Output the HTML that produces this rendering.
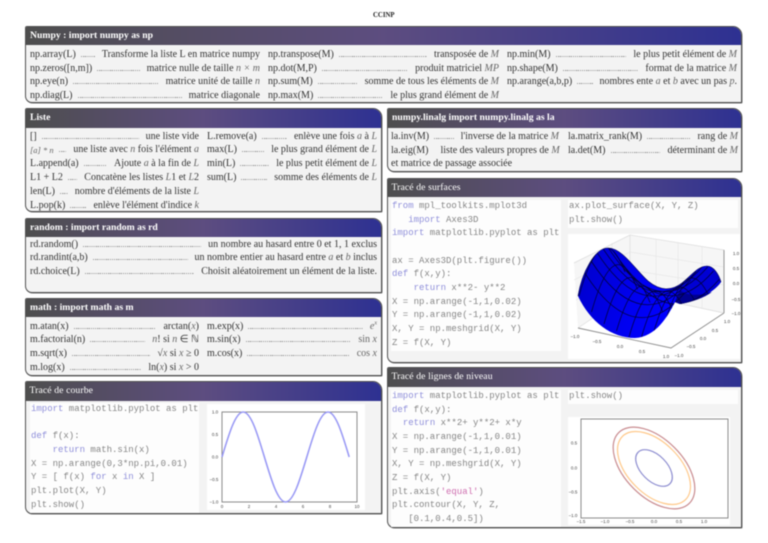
<!DOCTYPE html>
<html lang="fr"><head><meta charset="utf-8"><title>CCINP</title>
<style>
html,body{margin:0;padding:0;background:#fff}
#w{position:relative;width:768px;height:543px;overflow:hidden;filter:blur(.5px);font-family:"Liberation Serif",serif;color:#333}
.t{position:absolute;left:373px;top:11px;font-size:6.8px;font-weight:bold;color:#222;line-height:10px}
.b{position:absolute;box-sizing:border-box;border:1px solid #505050;border-radius:2px 9px 1px 7px;background:#f3f3f3;overflow:hidden;box-shadow:.5px .5px 0 #777}
.h{position:absolute;left:0;right:0;top:0;background:linear-gradient(90deg,#4e4e4e 0,#5d4d80 50%,#2e3192 100%);color:#fff;box-sizing:border-box;padding-left:4px;font-weight:bold;font-size:9.7px}
.h.n{font-weight:normal;font-size:9.7px;letter-spacing:.1px;padding-left:3.5px}
.r{position:absolute;display:flex;height:12px;line-height:12px;font-size:10px;white-space:nowrap}
.r i.l{flex:1;min-width:0;height:1px;margin:6.5px 7px 0 5px;background:repeating-linear-gradient(90deg,#999 0 1.2px,transparent 1.2px 2.1px)}
.r em{color:#666}
pre{position:absolute;margin:0;box-sizing:border-box;background:#fdfdfd;font-family:"Liberation Mono",monospace;font-size:9px;line-height:13.65px;color:#858585;padding-left:1px}
pre b{font-weight:normal;color:#8f8fda}
pre u{text-decoration:none;color:#cf6fb0}
svg{position:absolute;left:0;top:0}
svg text{font-family:"Liberation Sans",sans-serif;font-size:4.5px;fill:#444;text-anchor:middle}
</style></head><body><div id="w">
<div class="t">CCINP</div>

<div class="b" style="left:25px;top:26px;width:717px;height:77px"><div class="h" style="height:18px;line-height:18px">Numpy : import numpy as np</div></div>
<div class="r" style="left:30px;top:49px;width:230px"><span>np.array(L)</span><i class="l"></i><span>Transforme la liste L en matrice numpy</span></div>
<div class="r" style="left:30px;top:63px;width:230px"><span>np.zeros([n,m])</span><i class="l"></i><span>matrice nulle de taille <em>n × m</em></span></div>
<div class="r" style="left:30px;top:76px;width:230px"><span>np.eye(n)</span><i class="l"></i><span>matrice unité de taille <em>n</em></span></div>
<div class="r" style="left:30px;top:90px;width:230px"><span>np.diag(L)</span><i class="l"></i><span>matrice diagonale</span></div>
<div class="r" style="left:268px;top:49px;width:231px"><span>np.transpose(M)</span><i class="l"></i><span>transposée de <em>M</em></span></div>
<div class="r" style="left:268px;top:63px;width:231px"><span>np.dot(M,P)</span><i class="l"></i><span>produit matriciel <em>MP</em></span></div>
<div class="r" style="left:268px;top:76px;width:231px"><span>np.sum(M)</span><i class="l"></i><span>somme de tous les éléments de <em>M</em></span></div>
<div class="r" style="left:268px;top:90px;width:231px"><span>np.max(M)</span><i class="l"></i><span>le plus grand élément de <em>M</em></span></div>
<div class="r" style="left:507px;top:49px;width:230px"><span>np.min(M)</span><i class="l"></i><span>le plus petit élément de <em>M</em></span></div>
<div class="r" style="left:507px;top:63px;width:230px"><span>np.shape(M)</span><i class="l"></i><span>format de la matrice <em>M</em></span></div>
<div class="r" style="left:507px;top:76px;width:230px"><span>np.arange(a,b,p)</span><i class="l"></i><span>nombres ente <em>a</em> et <em>b</em> avec un pas <em>p</em>.</span></div>

<div class="b" style="left:25px;top:108px;width:357px;height:104px"><div class="h" style="height:19px;line-height:18px">Liste</div></div>
<div class="r" style="left:30px;top:131px;width:169px"><span>[]</span><i class="l"></i><span>une liste vide</span></div>
<div class="r" style="left:30px;top:144px;width:169px"><span><em style="font-size:8.5px">[a] * n</em></span><i class="l"></i><span>une liste avec <em>n</em> fois l'élément <em>a</em></span></div>
<div class="r" style="left:30px;top:158px;width:169px"><span>L.append(a)</span><i class="l"></i><span>Ajoute <em>a</em> à la fin de <em>L</em></span></div>
<div class="r" style="left:30px;top:172px;width:169px"><span>L1 + L2</span><i class="l"></i><span>Concatène les listes <em>L</em>1 et <em>L</em>2</span></div>
<div class="r" style="left:30px;top:186px;width:169px"><span>len(L)</span><i class="l"></i><span>nombre d'éléments de la liste <em>L</em></span></div>
<div class="r" style="left:30px;top:200px;width:169px"><span>L.pop(k)</span><i class="l"></i><span>enlève l'élément d'indice <em>k</em></span></div>
<div class="r" style="left:207px;top:131px;width:170px"><span>L.remove(a)</span><i class="l"></i><span>enlève une fois <em>a</em> à <em>L</em></span></div>
<div class="r" style="left:207px;top:144px;width:170px"><span>max(L)</span><i class="l"></i><span>le plus grand élément de <em>L</em></span></div>
<div class="r" style="left:207px;top:158px;width:170px"><span>min(L)</span><i class="l"></i><span>le plus petit élément de <em>L</em></span></div>
<div class="r" style="left:207px;top:172px;width:170px"><span>sum(L)</span><i class="l"></i><span>somme des éléments de <em>L</em></span></div>

<div class="b" style="left:25px;top:218px;width:357px;height:75px"><div class="h" style="height:18px;line-height:18px">random : import random as rd</div></div>
<div class="r" style="left:30px;top:239px;width:347px"><span>rd.random()</span><i class="l"></i><span>un nombre au hasard entre 0 et 1, 1 exclus</span></div>
<div class="r" style="left:30px;top:252px;width:347px"><span>rd.randint(a,b)</span><i class="l"></i><span>un nombre entier au hasard entre <em>a</em> et <em>b</em> inclus</span></div>
<div class="r" style="left:30px;top:266px;width:347px"><span>rd.choice(L)</span><i class="l"></i><span>Choisit aléatoirement un élément de la liste.</span></div>

<div class="b" style="left:25px;top:298px;width:357px;height:78px"><div class="h" style="height:18px;line-height:18px">math : import math as m</div></div>
<div class="r" style="left:30px;top:321px;width:169px"><span>m.atan(x)</span><i class="l"></i><span>arctan(<em>x</em>)</span></div>
<div class="r" style="left:30px;top:334px;width:169px"><span>m.factorial(n)</span><i class="l"></i><span><em>n</em>! si <em>n</em> ∈ ℕ</span></div>
<div class="r" style="left:30px;top:348px;width:169px"><span>m.sqrt(x)</span><i class="l"></i><span>√<em>x</em> si <em>x</em> ≥ 0</span></div>
<div class="r" style="left:30px;top:362px;width:169px"><span>m.log(x)</span><i class="l"></i><span>ln(<em>x</em>) si <em>x</em> &gt; 0</span></div>
<div class="r" style="left:207px;top:321px;width:170px"><span>m.exp(x)</span><i class="l"></i><span><em>e<sup style="font-size:6px;line-height:0">x</sup></em></span></div>
<div class="r" style="left:207px;top:334px;width:170px"><span>m.sin(x)</span><i class="l"></i><span style="color:#666">sin <em>x</em></span></div>
<div class="r" style="left:207px;top:348px;width:170px"><span>m.cos(x)</span><i class="l"></i><span style="color:#666">cos <em>x</em></span></div>

<div class="b" style="left:25px;top:381px;width:357px;height:133px"><div class="h n" style="height:19px;line-height:18px">Tracé de courbe</div></div>
<pre style="left:30px;top:403px;width:169px;height:110px"><b>import</b> matplotlib.pyplot as plt

<b>def</b> f(x):
    <b>return</b> math.sin(x)
X = np.arange(0,3*np.pi,0.01)
Y = [ f(x) <b>for</b> x <b>in</b> X ]
plt.plot(X, Y)
plt.show()</pre>

<div class="b" style="left:387px;top:108px;width:355px;height:64px"><div class="h" style="height:19px;line-height:18px">numpy.linalg import numpy.linalg as la</div></div>
<div class="r" style="left:391px;top:131px;width:168px"><span>la.inv(M)</span><i class="l"></i><span>l'inverse de la matrice <em>M</em></span></div>
<div class="r" style="left:391px;top:145px;width:168px"><span>la.eig(M)</span><i class="l" style="background:none"></i><span>liste des valeurs propres de <em>M</em></span></div>
<div class="r" style="left:391px;top:158px;width:168px"><span>et matrice de passage associée</span></div>
<div class="r" style="left:568px;top:131px;width:170px"><span>la.matrix_rank(M)</span><i class="l"></i><span>rang de <em>M</em></span></div>
<div class="r" style="left:568px;top:145px;width:170px"><span>la.det(M)</span><i class="l"></i><span>déterminant de <em>M</em></span></div>

<div class="b" style="left:387px;top:178px;width:355px;height:185px"><div class="h n" style="height:18px;line-height:17px">Tracé de surfaces</div></div>
<pre style="left:391px;top:200px;width:170px;height:151px"><b>from</b> mpl_toolkits.mplot3d
   <b>import</b> Axes3D
<b>import</b> matplotlib.pyplot as plt

ax = Axes3D(plt.figure())
<b>def</b> f(x,y):
    <b>return</b> x**2- y**2
X = np.arange(-1,1,0.02)
Y = np.arange(-1,1,0.02)
X, Y = np.meshgrid(X, Y)
Z = f(X, Y)</pre>
<pre style="left:568px;top:200px;width:170px;height:28px">ax.plot_surface(X, Y, Z)
plt.show()</pre>

<div class="b" style="left:387px;top:367px;width:355px;height:161px"><div class="h n" style="height:19px;line-height:18px">Tracé de lignes de niveau</div></div>
<pre style="left:391px;top:390px;width:170px;height:137px"><b>import</b> matplotlib.pyplot as plt
<b>def</b> f(x,y):
  <b>return</b> x**2+ y**2+ x*y
X = np.arange(-1,1,0.01)
Y = np.arange(-1,1,0.01)
X, Y = np.meshgrid(X, Y)
Z = f(X, Y)
plt.axis(<u>'equal'</u>)
plt.contour(X, Y, Z,
   [0.1,0.4,0.5])</pre>
<pre style="left:568px;top:390px;width:170px;height:14px">plt.show()</pre>

<svg width="768" height="543" viewBox="0 0 768 543" fill="none">
<defs>
<linearGradient id="g" x1="0" y1="0" x2="1" y2=".25"><stop offset="0" stop-color="#0000c8"/><stop offset=".5" stop-color="#0000f0"/><stop offset=".75" stop-color="#0000ff"/><stop offset="1" stop-color="#0000c8"/></linearGradient>
<clipPath id="c"><path d="M578 296C582 272 595 248 608 248C622 248 634 268 648 281C660 291 672 291 682 283C692 275 698 266 707 266C714 266 719 275 721 282C714 292 698 301 680 304L675 302C668 316 656 337 635 338C612 338 590 322 578 296Z"/></clipPath>
</defs>

<!-- sine -->
<rect x="207" y="404" width="158" height="106" fill="#fff"/>
<rect x="222" y="412" width="135" height="90" stroke="#8a8a8a" stroke-width="1"/>
<path d="M222 457C228.9 434 235.5 412 243.2 412C250.9 412 257.5 434 264.4 457C271.3 480 277.9 502 285.6 502C293.3 502 299.9 480 306.8 457C313.7 434 320.3 412 328 412C335.7 412 342.3 434 349.2 457" stroke="#9a9af5" stroke-width="1.6"/>
<text x="215" y="413.5">1.0</text><text x="215" y="436">0.5</text><text x="215" y="458.5">0.0</text><text x="214" y="481">−0.5</text><text x="214" y="503.5">−1.0</text>
<text x="222" y="508">0</text><text x="249" y="508">2</text><text x="276" y="508">4</text><text x="303" y="508">6</text><text x="330" y="508">8</text><text x="357" y="508">10</text>

<!-- surface -->
<rect x="568" y="234" width="172" height="125" fill="#fff"/>
<path d="M574 263L630 235L724 250L724 313L630 293L578 328Z" fill="#f6f6f6"/>
<path d="M630 235L630 293M574 263L630 235L724 250M578 328L630 293L724 313" stroke="#dcdcdc" stroke-width=".7"/>
<path d="M598 250V312M612 243V302M656 239V299M678 243V304M702 247V309M574 280L630 252L724 267M576 300L630 270L724 285" stroke="#e4e4e4" stroke-width=".6"/>
<path d="M578 328L671 348L724 313M724 250V313" stroke="#8c8c8c" stroke-width=".9"/>
<path d="M578 296C582 272 595 248 608 248C622 248 634 268 648 281C660 291 672 291 682 283C692 275 698 266 707 266C714 266 719 275 721 282C714 292 698 301 680 304L675 302C668 316 656 337 635 338C612 338 590 322 578 296Z" fill="url(#g)"/>
<path d="M675 302C677 296 679 290 682 284C690 280 697 268 707 268C708 275 716 280 721 282C714 292 698 301 680 304Z" fill="#0000d4"/>
<path d="M675 302L680 290C686 296 700 296 712 292C704 298 692 302 680 304Z" fill="#000090"/>
<g clip-path="url(#c)" stroke="#00003c" stroke-width=".75">
<path d="M579 296Q602 213 625 272M591.5 312Q614.5 230.4 637.5 289.4M604 324Q627 243.5 650 302.5M616.5 331Q639.5 252.4 662.5 311.4M629 337Q652 257 675 316M641.5 337Q664.5 257.4 687.5 316.4M654 331Q677 253.5 700 312.5M666.5 318Q689.5 245.4 712.5 304.4"/>
<path d="M584.75 272.9Q634.75 350.9 684.75 292.9M590.5 260Q640.5 338 690.5 280M596.25 251.4Q646.25 329.4 696.25 271.4M602 247Q652 325 702 267M607.75 246.9Q657.75 324.9 707.75 266.9M613.5 251Q663.5 329 713.5 271M619.25 259.4Q669.25 337.4 719.25 279.4"/>
</g>
<path d="M578 296C582 272 595 248 608 248C622 248 634 268 648 281C660 291 672 291 682 283C692 275 698 266 707 266C714 266 719 275 721 282" stroke="#00004a" stroke-width=".6"/>
<text x="575" y="338">−1.0</text><text x="597" y="343">−0.5</text><text x="620" y="348">0.0</text><text x="642" y="353">0.5</text><text x="666" y="358">1.0</text>
<text x="679" y="357">−1.0</text><text x="691" y="348">−0.5</text><text x="703" y="340">0.0</text><text x="715" y="332">0.5</text><text x="727" y="323">1.0</text>
<text x="736" y="255">1.0</text><text x="736" y="270">0.5</text><text x="736" y="285">0.0</text><text x="736" y="301">−0.5</text><text x="736" y="315">−1.0</text>

<!-- contour -->
<rect x="568" y="417" width="162" height="108" fill="#fff"/>
<rect x="581" y="419" width="147" height="99" stroke="#8a8a8a" stroke-width="1"/>
<g transform="rotate(45 654 468)" stroke-width="1.2">
<ellipse cx="654" cy="468" rx="50" ry="28.9" stroke="#c98c90"/>
<ellipse cx="654" cy="468" rx="44.7" ry="25.8" stroke="#ffc98a"/>
<ellipse cx="654" cy="468" rx="22.4" ry="12.9" stroke="#8d8dd0"/>
</g>
<text x="574" y="444.5">0.5</text><text x="574" y="469.5">0.0</text><text x="573" y="493.5">−0.5</text><text x="573" y="517">−1.0</text>
<text x="581" y="523">−1.5</text><text x="605" y="523">−1.0</text><text x="630" y="523">−0.5</text><text x="654" y="523">0.0</text><text x="679" y="523">0.5</text><text x="704" y="523">1.0</text>
</svg>
</div></body></html>
